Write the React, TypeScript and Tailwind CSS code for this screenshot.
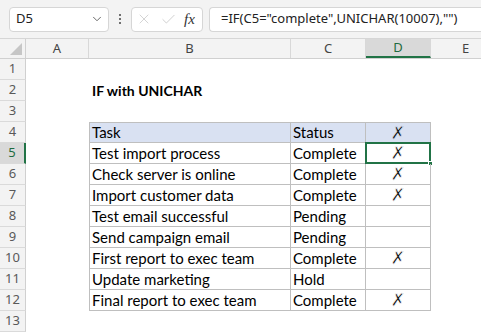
import { ChevronDown, X, Check } from 'lucide-react';

type Row = { task: string; status: string; mark: string };

const rows: Row[] = [
  { task: 'Test import process', status: 'Complete', mark: '✗' },
  { task: 'Check server is online', status: 'Complete', mark: '✗' },
  { task: 'Import customer data', status: 'Complete', mark: '✗' },
  { task: 'Test email successful', status: 'Pending', mark: '' },
  { task: 'Send campaign email', status: 'Pending', mark: '' },
  { task: 'First report to exec team', status: 'Complete', mark: '✗' },
  { task: 'Update marketing', status: 'Hold', mark: '' },
  { task: 'Final report to exec team', status: 'Complete', mark: '✗' },
];

const cols = [
  { key: 'A', w: 'w-[63px]' },
  { key: 'B', w: 'w-[202px]' },
  { key: 'C', w: 'w-[75px]' },
  { key: 'D', w: 'w-[65px]' },
  { key: 'E', w: 'w-[70px]' },
];

function RowHead({ n, active }: { n?: number; active?: boolean }) {
  return (
    <div
      className={`w-[26px] shrink-0 h-full flex items-center justify-center border-b border-[#dadada] text-[13px] ${active ? 'bg-[#d9d9d9] border-r-2 border-r-[#217346] text-[#1e6b40]' : 'bg-[#f3f3f3] border-r border-r-[#d0d0d0] text-[#595959]'}`}
    >
      {n}
    </div>
  );
}

export default function App() {
  const cell = "font-['Lato',sans-serif] text-[15px] text-black";
  const mark = "font-['DejaVu_Sans',sans-serif] text-[18px] text-[#111]";
  return (
    <div className="w-[481px] h-[332px] overflow-hidden bg-white font-['Noto_Sans',sans-serif] relative">
      {/* Formula bar */}
      <div className="h-[39px] bg-[#f3f3f3] border-b border-[#d6d6d6] flex items-center pl-[9px]">
        <div className="w-[100px] h-[25px] bg-white border border-[#d6d6d6] rounded-[4px] flex items-center justify-between pl-[6px] pr-[4px]">
          <span className="text-[13px] text-[#222]">D5</span>
          <ChevronDown className="w-[14px] h-[14px] text-[#555]" strokeWidth={1.5} />
        </div>
        <div className="w-[22px] flex flex-col items-center gap-[2px]">
          <span className="w-[2px] h-[2px] bg-[#444] rounded-full" />
          <span className="w-[2px] h-[2px] bg-[#444] rounded-full" />
          <span className="w-[2px] h-[2px] bg-[#444] rounded-full" />
        </div>
        <div className="w-[72px] h-[25px] bg-white border border-[#d6d6d6] rounded-[4px] flex items-center pl-[4px]">
          <X className="w-[16px] h-[16px] text-[#c4c4c4]" strokeWidth={1.1} />
          <Check className="ml-[8px] w-[17px] h-[17px] text-[#c4c4c4]" strokeWidth={1.1} />
          <span className="ml-[7px] font-['Liberation_Serif',serif] italic text-[15px] text-[#333]">fx</span>
        </div>
        <div className="ml-[6px] flex-1 h-[25px] bg-white border border-r-0 border-[#d6d6d6] rounded-l-[4px] flex items-center pl-[11px]">
          <span className="text-[13px] text-[#222] whitespace-nowrap">=IF(C5="complete",UNICHAR(10007),"")</span>
        </div>
      </div>

      {/* Column headers */}
      <div className="h-[20px] flex bg-[#f3f3f3] border-b border-[#d0d0d0]">
        <div className="w-[26px] shrink-0 border-r border-[#d0d0d0] relative">
          <div className="absolute right-[3px] bottom-[3px] w-0 h-0 border-l-[12px] border-l-transparent border-b-[12px] border-b-[#c6c6c6]" />
        </div>
        {cols.map((c) => (
          <div
            key={c.key}
            className={`${c.w} shrink-0 flex items-center justify-center text-[13px] border-r border-[#d8d8d8] ${c.key === 'D' ? 'bg-[#d9d9d9] border-b-2 border-b-[#217346] text-[#1e6b40]' : 'text-[#444]'}`}
          >
            {c.key}
          </div>
        ))}
      </div>

      {/* Rows 1-3 */}
      {[1, 2, 3].map((n) => (
        <div key={n} className="h-[21px] flex">
          <RowHead n={n} />
          <div className="w-[63px] shrink-0" />
          <div className="w-[202px] shrink-0 flex items-center pl-[3px] font-['Lato',sans-serif] text-[14px] font-bold text-black">
            {n === 2 ? 'IF with UNICHAR' : ''}
          </div>
        </div>
      ))}

      {/* Table header row 4 */}
      <div className="h-[21px] flex">
        <RowHead n={4} />
        <div className="w-[63px] shrink-0" />
        <div className={`w-[202px] shrink-0 flex items-center pl-[2px] bg-[#d9e1f2] border border-[#bfbfbf] ${cell}`}>Task</div>
        <div className={`w-[75px] shrink-0 flex items-center pl-[2px] bg-[#d9e1f2] border-y border-r border-[#bfbfbf] ${cell}`}>Status</div>
        <div className={`w-[65px] shrink-0 flex items-center justify-center bg-[#d9e1f2] border-y border-r border-[#bfbfbf] leading-none ${mark} [-webkit-text-stroke:0.75px_#d9e1f2]`}>✗</div>
      </div>

      {/* Data rows */}
      {rows.map((r, i) => (
        <div key={i} className="h-[21px] flex">
          <RowHead n={i + 5} active={i === 0} />
          <div className="w-[63px] shrink-0" />
          <div className={`w-[202px] shrink-0 flex items-center pl-[2px] border-x border-b border-[#bfbfbf] ${cell} whitespace-nowrap`}>{r.task}</div>
          <div className={`w-[75px] shrink-0 flex items-center pl-[2px] border-r border-b border-[#bfbfbf] ${cell}`}>{r.status}</div>
          <div className={`w-[65px] shrink-0 flex items-center justify-center border-r border-b border-[#bfbfbf] relative leading-none ${mark} [-webkit-text-stroke:0.75px_white]`}>
            {r.mark}
            {i === 0 && (
              <>
                <div className="absolute -left-[1px] -top-[1px] -right-[1px] -bottom-[1px] border-2 border-[#217346]" />
                <div className="absolute -right-[3px] -bottom-[3px] w-[5px] h-[5px] bg-[#217346] border border-white" />
              </>
            )}
          </div>
        </div>
      ))}

      {/* Row 13 */}
      <div className="h-[21px] flex">
        <RowHead n={13} />
      </div>
      <div className="h-[21px] flex">
        <RowHead />
      </div>
    </div>
  );
}
